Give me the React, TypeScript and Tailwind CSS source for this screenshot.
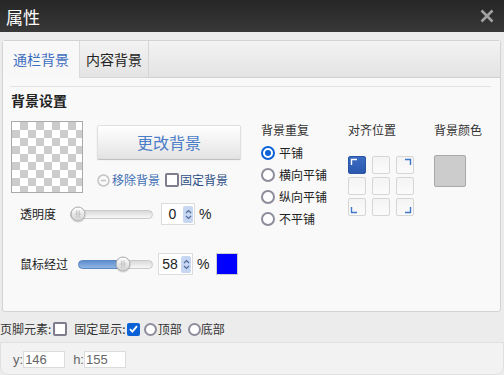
import React from 'react';

const cjk = "font-['Noto_Sans_CJK_SC',sans-serif]";
const latin = "font-['Liberation_Sans',Arial,sans-serif]";

function Radio({ checked, size = 14 }: { checked?: boolean; size?: number }) {
  const box = size === 14 ? 'h-[14px] w-[14px]' : 'h-[13px] w-[13px]';
  if (checked) {
    return (
      <span className={`flex ${box} shrink-0 items-center justify-center rounded-full border-2 border-[#0b62d6] bg-white`}>
        <span className="h-[6px] w-[6px] rounded-full bg-[#0b62d6]" />
      </span>
    );
  }
  return <span className={`block ${box} shrink-0 rounded-full border-2 border-[#8d8d9b] bg-white`} />;
}

function Checkbox({ checked }: { checked?: boolean }) {
  if (checked) {
    return (
      <span className="flex h-[13px] w-[13px] shrink-0 items-center justify-center rounded-[2px] bg-[#0b62d6]">
        <svg width="9" height="8" viewBox="0 0 9 8">
          <path d="M1 4.2 3.4 6.6 8 1.2" fill="none" stroke="#fff" strokeWidth="1.8" />
        </svg>
      </span>
    );
  }
  return <span className="block h-[14px] w-[14px] shrink-0 rounded-[2px] border-2 border-[#7d7d8d] bg-white" />;
}

function Thumb() {
  return (
    <span className="absolute top-1/2 flex h-[15px] w-[15px] -translate-x-1/2 -translate-y-1/2 items-center justify-center rounded-full border border-[#a9a9a9] bg-gradient-to-b from-[#ffffff] to-[#d2d2d2] shadow-[0_1px_1px_rgba(0,0,0,0.15)]">
      <svg width="9" height="9" viewBox="0 0 9 9">
        <path d="M3 1v7M4.5 1v7M6 1v7M1 4.5h7" stroke="#c4c4c4" strokeWidth="0.8" />
      </svg>
    </span>
  );
}

function Slider({ width, value }: { width: number; value: number }) {
  const fill = Math.round((width * value) / 100);
  return (
    <div className="relative h-[9px] shrink-0 rounded-full border border-[#c9c9c9] bg-gradient-to-b from-[#dadada] to-[#f7f7f7]" style={{ width }}>
      {value > 0 && (
        <div className="absolute inset-y-[-1px] left-[-1px] rounded-full border border-[#5c88c4] bg-gradient-to-b from-[#5f8fcf] to-[#8fb4e4]" style={{ width: fill + 2 }} />
      )}
      <span className="absolute inset-y-0" style={{ left: Math.max(fill, 7) }}>
        <Thumb />
      </span>
    </div>
  );
}

function Spin({ value, width }: { value: string; width: number }) {
  return (
    <div className="flex h-[22px] shrink-0 items-center border border-[#dcdcdc] bg-white" style={{ width }}>
      <span className={`flex-1 text-center text-[14px] leading-none text-[#222] ${latin}`}>{value}</span>
      <span className="mr-[1px] flex h-[17px] w-[10px] items-center justify-center rounded-[2px] bg-[#c7d7f1]">
        <svg width="7" height="11" viewBox="0 0 7 11">
          <path d="M1 4 3.5 1.5 6 4M1 7l2.5 2.5L6 7" fill="none" stroke="#4f6c9c" strokeWidth="1.2" />
        </svg>
      </span>
    </div>
  );
}

function Cell({ mark, active }: { mark?: string; active?: boolean }) {
  return (
    <div
      className={`h-[18px] w-[18px] rounded-[2px] border ${
        active
          ? 'border-[#2a55a3] bg-gradient-to-b from-[#3a6cc4] to-[#2a58ad]'
          : 'border-[#d6d6d6] bg-gradient-to-b from-[#f4f4f4] to-[#fbfbfb]'
      }`}
    >
      {mark && (
        <svg width="16" height="16" viewBox="0 0 16 16">
          <path d={mark} fill="none" stroke={active ? '#fff' : '#3f78c8'} strokeWidth="1.4" />
        </svg>
      )}
    </div>
  );
}

export default function App() {
  const repeats = ['平铺', '横向平铺', '纵向平铺', '不平铺'];
  return (
    <div className={`flex h-[375px] w-[504px] flex-col overflow-hidden bg-[#ececec] text-[#333] ${cjk}`}>
      <header className="flex h-8 shrink-0 items-center justify-between bg-gradient-to-b from-[#262626] to-[#383838] pl-[6px] pr-[10px]">
        <span className="text-[17px] leading-none text-white">属性</span>
        <svg width="14" height="14" viewBox="0 0 14 14">
          <path d="M1.5 1.5l11 11M12.5 1.5l-11 11" stroke="#a2a2a2" strokeWidth="2.6" />
        </svg>
      </header>

      <div className="ml-[2px] mt-2 flex h-[272px] w-[499px] flex-col rounded-[3px] border border-[#d3d3d3] bg-[#f9f9f9]">
        <div className="flex h-[37px] shrink-0 bg-gradient-to-b from-[#f3f3f3] to-[#e3e3e3]">
          <div className="flex items-center border-r border-[#dadada] bg-[#f8f8f8] px-[10px] text-[14px] text-[#3d6fc0]">通栏背景</div>
          <div className="flex items-center border-r border-b border-[#d6d6d6] px-[6px] text-[14px] text-[#222]">内容背景</div>
          <div className="flex-1 border-b border-[#d0d0d0]" />
        </div>

        <div className="ml-[7px] mr-[9px] flex flex-col">
          <div className="mt-[8px] h-px bg-[#e2e2e2]" />
          <div className="mt-[3px] pl-px text-[14px] font-bold leading-[20px] text-[#222]">背景设置</div>

          <div className="mt-[11px] flex">
            <div className="flex w-[251px] flex-col">
              <div className="flex">
                <div className="ml-px h-[72px] w-[72px] border border-[#ababab] bg-[image:conic-gradient(#cccccc_25%,#ffffff_0_50%,#cccccc_0_75%,#ffffff_0)] bg-[length:16px_16px]" />
                <div className="ml-[14px] mt-[4px] flex flex-col">
                  <button className="h-[34px] w-[144px] rounded-[2px] border border-[#e0e0e0] bg-gradient-to-b from-[#ffffff] to-[#e4e4e4] text-[16px] text-[#4a7cc7] shadow-[0_1px_1px_rgba(0,0,0,0.25)]">
                    更改背景
                  </button>
                  <div className="mt-[13px] flex h-[16px] items-center text-[12px]">
                    <svg width="13" height="13" viewBox="0 0 13 13">
                      <circle cx="6.5" cy="6.5" r="5.5" fill="none" stroke="#c3c3c3" strokeWidth="1.5" />
                      <path d="M3.8 6.5h5.4" stroke="#c3c3c3" strokeWidth="1.5" />
                    </svg>
                    <span className="ml-[2px] text-[#3f6fb4]">移除背景</span>
                    <span className="ml-[5px]">
                      <Checkbox />
                    </span>
                    <span className="ml-[1px] text-[#2d4f86]">固定背景</span>
                  </div>
                </div>
              </div>

              <div className="mt-[10px] flex h-[22px] items-center pl-[10px] text-[12px]">
                <span className="w-[36px] text-[#222]">透明度</span>
                <span className="ml-[14px] flex">
                  <Slider width={83} value={0} />
                </span>
                <span className="ml-[8px]">
                  <Spin value="0" width={34} />
                </span>
                <span className={`ml-[4px] text-[14px] text-[#222] ${latin}`}>%</span>
              </div>

              <div className="mt-[28px] flex h-[22px] items-center pl-[10px] text-[12px]">
                <span className="w-[48px] text-[#222]">鼠标经过</span>
                <span className="ml-[10px] flex">
                  <Slider width={75} value={58} />
                </span>
                <span className="ml-[5px]">
                  <Spin value="58" width={35} />
                </span>
                <span className={`ml-[4px] text-[14px] text-[#222] ${latin}`}>%</span>
                <span className="ml-[7px] h-[22px] w-[22px] border border-[#cfcfcf] bg-[#0000ff]" />
              </div>
            </div>

            <div className="flex w-[87px] flex-col text-[12px]">
              <div className="leading-[18px]">背景重复</div>
              <div className="mt-[3px] flex flex-col">
                {repeats.map((r, i) => (
                  <div key={r} className="flex h-[22px] items-center">
                    <Radio checked={i === 0} />
                    <span className="ml-[4px] text-[#222]">{r}</span>
                  </div>
                ))}
              </div>
            </div>

            <div className="flex w-[86px] flex-col text-[12px]">
              <div className="leading-[18px]">对齐位置</div>
              <div className="mt-[17px] grid w-[66px] grid-cols-3 gap-x-[6px] gap-y-[3px]">
                <Cell active mark="M2.5 8V2.5H8" />
                <Cell />
                <Cell mark="M8 2.5h5.5V8" />
                <Cell />
                <Cell />
                <Cell />
                <Cell mark="M2.5 8v5.5H8" />
                <Cell />
                <Cell mark="M13.5 8v5.5H8" />
              </div>
            </div>

            <div className="flex flex-col text-[12px]">
              <div className="leading-[18px]">背景颜色</div>
              <div className="mt-[16px] h-[32px] w-[32px] rounded-[2px] border border-[#a9a9a9] bg-[#cccccc]" />
            </div>
          </div>
        </div>
      </div>

      <div className="mt-[9px] flex h-[16px] items-center text-[12px] text-[#333]">
        <span>页脚元素:</span>
        <span className="ml-[2px]">
          <Checkbox />
        </span>
        <span className="ml-[7px]">固定显示:</span>
        <span className="ml-[1px]">
          <Checkbox checked />
        </span>
        <span className="ml-[4px]">
          <Radio size={13} />
        </span>
        <span className="ml-[1px]">顶部</span>
        <span className="ml-[6px]">
          <Radio size={13} />
        </span>
        <span>底部</span>
      </div>

      <div className="mt-[5px] flex flex-1 items-start rounded-b-[8px] border border-[#e0e0e0] bg-[#f2f2f2] pl-[12px] pt-[8px] text-[13px] text-[#666]">
        <span className={`leading-[17px] ${latin}`}>y:</span>
        <span className={`h-[17px] w-[42px] border border-[#dcdcdc] bg-white pl-px leading-[15px] ${latin}`}>146</span>
        <span className={`ml-[8px] leading-[17px] ${latin}`}>h:</span>
        <span className={`h-[17px] w-[42px] border border-[#dcdcdc] bg-white pl-px leading-[15px] ${latin}`}>155</span>
      </div>
    </div>
  );
}
